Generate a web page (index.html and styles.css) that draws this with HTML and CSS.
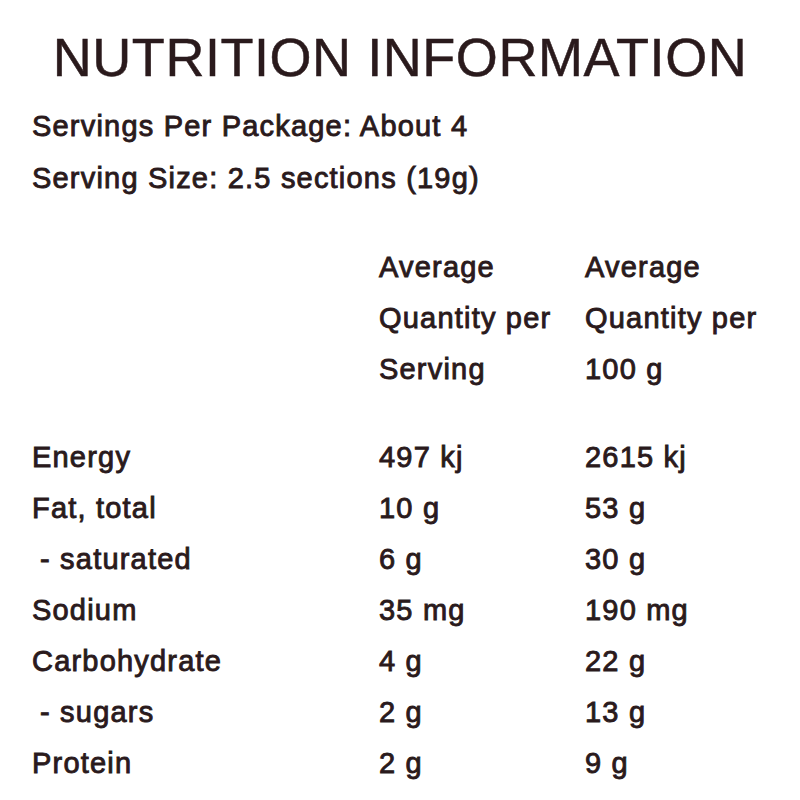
FILE: index.html
```html
<!DOCTYPE html>
<html lang="en">
<head>
<meta charset="utf-8">
<title>Nutrition Information</title>
<link rel="stylesheet" href="styles.css">
</head>
<body>
<main class="label">
  <h1 class="title">NUTRITION INFORMATION</h1>
  <div class="servings">
    <p class="line">Servings Per Package: About 4</p>
    <p class="line">Serving Size: 2.5 sections (19g)</p>
  </div>
  <div class="table">
    <div class="head-blank"></div>
    <div class="head">Average<br>Quantity per<br>Serving</div>
    <div class="head">Average<br>Quantity per<br>100 g</div>

    <div class="cell name">Energy</div><div class="cell">497 kj</div><div class="cell">2615 kj</div>
    <div class="cell name">Fat, total</div><div class="cell">10 g</div><div class="cell">53 g</div>
    <div class="cell name sub">- saturated</div><div class="cell">6 g</div><div class="cell">30 g</div>
    <div class="cell name">Sodium</div><div class="cell">35 mg</div><div class="cell">190 mg</div>
    <div class="cell name">Carbohydrate</div><div class="cell">4 g</div><div class="cell">22 g</div>
    <div class="cell name sub">- sugars</div><div class="cell">2 g</div><div class="cell">13 g</div>
    <div class="cell name">Protein</div><div class="cell">2 g</div><div class="cell">9 g</div>
  </div>
</main>
</body>
</html>
```
FILE: styles.css
```css
html, body {
  margin: 0;
  padding: 0;
  background: #ffffff;
}

body {
  font-family: "Liberation Sans", Arial, sans-serif;
  color: #2a1a1c;
}

.label {
  width: 800px;
  height: 800px;
  box-sizing: border-box;
  padding: 27px 0 0 32px;
  overflow: hidden;
}

.title {
  margin: 0 0 0 -32px;
  width: 800px;
  text-align: center;
  font-weight: 400;
  font-size: 54px;
  line-height: 60px;
  letter-spacing: 0.55px;
  -webkit-text-stroke: 0.5px #2a1a1c;
}

.servings {
  margin-top: 13px;
}

.line,
.head,
.cell {
  font-size: 29px;
  letter-spacing: 1.2px;
  -webkit-text-stroke: 0.9px #2a1a1c;
}

.line {
  margin: 0;
  line-height: 52px;
}

.table {
  margin-top: 38px;
  display: grid;
  grid-template-columns: 347px 206px 1fr;
  line-height: 51px;
}

.head {
  line-height: 51px;
  padding-bottom: 37px;
}

.sub {
  padding-left: 8px;
}
```
